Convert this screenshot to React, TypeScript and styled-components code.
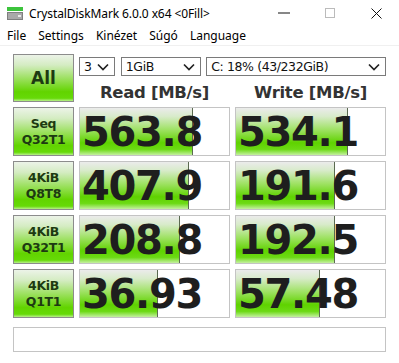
import React from 'react';
import styled, { createGlobalStyle } from 'styled-components';

const GlobalStyle = createGlobalStyle`
  body {
    margin: 0;
    background: #ffffff;
    font-family: "Noto Sans", "DejaVu Sans", sans-serif;
  }
`;

interface Result {
  label: string[];
  read: number;
  write: number;
}

const results: Result[] = [
  { label: ['Seq', 'Q32T1'], read: 563.8, write: 534.1 },
  { label: ['4KiB', 'Q8T8'], read: 407.9, write: 191.6 },
  { label: ['4KiB', 'Q32T1'], read: 208.8, write: 192.5 },
  { label: ['4KiB', 'Q1T1'], read: 36.93, write: 57.48 },
];

// CDM draws the meter on a log scale
const meter = (value: number): number => Math.min(1, 0.206 + 0.198 * Math.log10(value));

const fmt = (value: number): string => (value >= 100 ? value.toFixed(1) : value.toFixed(2));

const Window = styled.div`
  width: 399px;
  height: 363px;
  background: #ffffff;
  overflow: hidden;
`;

const TitleBar = styled.div`
  height: 26px;
  display: flex;
  align-items: center;
  padding-left: 7px;
`;

const Title = styled.span`
  flex: 1;
  margin-left: 6px;
  font-size: 12px;
  color: #000;
  letter-spacing: -0.1px;
`;

const Caption = styled.div`
  width: 46px;
  height: 26px;
  display: flex;
  align-items: center;
  justify-content: center;
`;

const MenuBar = styled.div`
  height: 19px;
  display: flex;
  align-items: center;
  padding-left: 7px;
  gap: 12px;
  border-bottom: 1px solid #f0f0f0;
  font-size: 12px;
  color: #000;
`;

const Board = styled.div`
  display: grid;
  grid-template-columns: 61px 151px 151px;
  grid-template-rows: 48px repeat(4, 49px) 29px;
  column-gap: 5px;
  row-gap: 5px;
  padding: 8px 0 0 13px;
`;

const GreenButton = styled.div`
  box-sizing: border-box;
  border: 1px solid #8c8c8c;
  background: linear-gradient(
    to bottom,
    #ecf3e8 0%,
    #d4ecc2 22%,
    #9ae05c 52%,
    #62d400 80%,
    #66da08 94%,
    #b8f08a 100%
  );
  display: flex;
  flex-direction: column;
  align-items: center;
  justify-content: center;
  font-family: "DejaVu Sans", Verdana, sans-serif;
  font-weight: bold;
  color: #1d3a12;
`;

const AllButton = styled(GreenButton)`
  font-size: 17px;
`;

const TestButton = styled(GreenButton)`
  font-size: 12.5px;
  line-height: 16px;
  letter-spacing: -0.3px;
`;

const Controls = styled.div`
  grid-column: 2 / 4;
  display: flex;
  flex-direction: column;
  padding-top: 3px;
`;

const ComboRow = styled.div`
  display: flex;
  gap: 5px;
`;

const Combo = styled.div<{ $width: number }>`
  box-sizing: border-box;
  width: ${(p) => p.$width}px;
  height: 19px;
  border: 1px solid #7a7a7a;
  background: #fff;
  display: flex;
  align-items: center;
  justify-content: space-between;
  padding: 0 5px 0 4px;
  font-family: "DejaVu Sans", Verdana, sans-serif;
  font-size: 12.5px;
  color: #111;
  letter-spacing: -0.4px;
`;

const Headers = styled.div`
  display: grid;
  grid-template-columns: 151px 151px;
  column-gap: 5px;
  margin-top: 7px;
`;

const Header = styled.div`
  text-align: center;
  font-family: "DejaVu Sans", Verdana, sans-serif;
  font-weight: bold;
  font-size: 16.5px;
  color: #333;
  letter-spacing: -0.3px;
`;

const Meter = styled.div`
  position: relative;
  box-sizing: border-box;
  border: 1px solid #c4c4c4;
  background: #fff;
  overflow: hidden;
  display: flex;
  align-items: center;
`;

const Fill = styled.div`
  position: absolute;
  left: 0;
  top: 0;
  bottom: 0;
  border-right: 1px solid #5a6a50;
  background: linear-gradient(
    to bottom,
    #ebebeb 0%,
    #d8ebca 18%,
    #9fe264 46%,
    #5fd200 74%,
    #6cda14 88%,
    #c4f0a0 100%
  );
`;

const Score = styled.span`
  position: relative;
  margin-left: 2px;
  font-family: "DejaVu Sans", Verdana, sans-serif;
  font-weight: bold;
  font-size: 40px;
  letter-spacing: -1.3px;
  color: #1e1e1e;
`;

const Comment = styled.div`
  grid-column: 1 / 4;
  margin-top: 4px;
  box-sizing: border-box;
  border: 1px solid #c4c4c4;
  background: #fff;
`;

const Chevron = () => (
  <svg width="12" height="8" viewBox="0 0 12 8">
    <polyline points="1,1.5 6,6.5 11,1.5" fill="none" stroke="#222" strokeWidth="1.7" />
  </svg>
);

const AppIcon = () => (
  <svg width="16" height="15" viewBox="0 0 16 15">
    <rect x="0" y="1" width="16" height="4" fill="#3cc43c" />
    <rect x="0" y="6" width="16" height="8" fill="#7f7f7f" />
    <rect x="1" y="7" width="14" height="6" fill="#a9a9a9" />
    <rect x="11" y="9" width="3" height="2" fill="#e8e8e8" />
  </svg>
);

const Row: React.FC<{ result: Result }> = ({ result }) => (
  <>
    <TestButton>
      {result.label.map((line) => (
        <span key={line}>{line}</span>
      ))}
    </TestButton>
    {[result.read, result.write].map((value, i) => (
      <Meter key={i}>
        <Fill style={{ width: `${Math.round(meter(value) * 149)}px` }} />
        <Score>{fmt(value)}</Score>
      </Meter>
    ))}
  </>
);

const App: React.FC = () => {
  return (
    <Window>
      <GlobalStyle />
      <TitleBar>
        <AppIcon />
        <Title>CrystalDiskMark 6.0.0 x64 &lt;0Fill&gt;</Title>
        <Caption>
          <svg width="12" height="2" viewBox="0 0 12 2">
            <rect width="12" height="1" y="0.5" fill="#111" />
          </svg>
        </Caption>
        <Caption>
          <svg width="10" height="10" viewBox="0 0 10 10">
            <rect x="0.5" y="0.5" width="9" height="9" fill="none" stroke="#bbb" />
          </svg>
        </Caption>
        <Caption>
          <svg width="11" height="11" viewBox="0 0 11 11">
            <path d="M0.5 0.5 L10.5 10.5 M10.5 0.5 L0.5 10.5" stroke="#111" strokeWidth="1" />
          </svg>
        </Caption>
      </TitleBar>
      <MenuBar>
        <span>File</span>
        <span>Settings</span>
        <span>Kinézet</span>
        <span>Súgó</span>
        <span>Language</span>
      </MenuBar>
      <Board>
        <AllButton>All</AllButton>
        <Controls>
          <ComboRow>
            <Combo $width={36}>
              <span>3</span>
              <Chevron />
            </Combo>
            <Combo $width={81} style={{ marginLeft: 1 }}>
              <span>1GiB</span>
              <Chevron />
            </Combo>
            <Combo $width={181}>
              <span>C: 18% (43/232GiB)</span>
              <Chevron />
            </Combo>
          </ComboRow>
          <Headers>
            <Header>Read [MB/s]</Header>
            <Header>Write [MB/s]</Header>
          </Headers>
        </Controls>
        {results.map((r) => (
          <Row key={r.label.join(' ')} result={r} />
        ))}
        <Comment />
      </Board>
    </Window>
  );
};

export default App;
